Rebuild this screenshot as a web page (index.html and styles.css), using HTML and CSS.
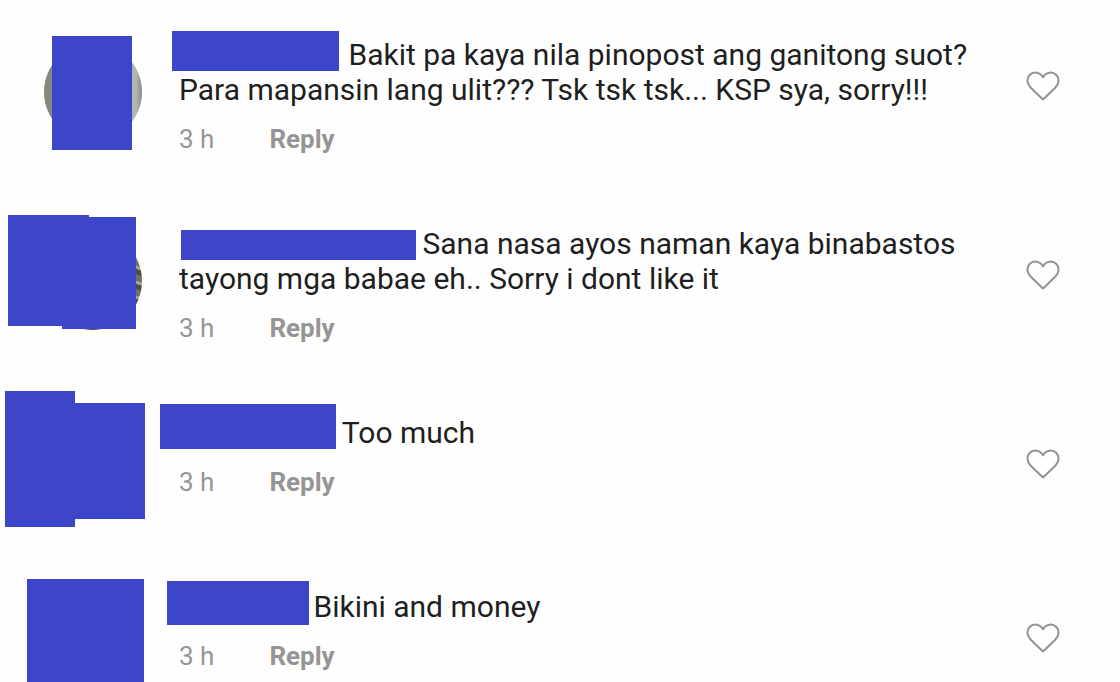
FILE: index.html
```
<!DOCTYPE html>
<html lang="tl">

<head>
    <meta charset="utf-8">
    <meta name="viewport" content="width=device-width, initial-scale=1">
    <title>Comments</title>
    <link rel="stylesheet" href="styles.css">
</head>

<body>
    <svg class="defs" aria-hidden="true">
        <symbol id="heart" viewBox="0 0 34 30">
            <path d="M17 28.5 L4.8 16.8 C0.8 13 0.4 7.4 3.6 4 C7.6 0 14.2 1 17 6.4 C19.8 1 26.4 0 30.4 4 C33.6 7.4 33.2 13 29.2 16.8 Z"
                fill="none" stroke="currentColor" stroke-width="2" stroke-linejoin="round" />
        </symbol>
    </svg>
    <main class="comments">
        <article class="comment">
            <div class="avatar avatar-gray">
                <span class="mask avatar-mask-1"></span>
            </div>
            <div class="content">
                <p class="text"><span class="name name-1"><span class="mask"></span></span> Bakit pa kaya nila pinopost ang ganitong suot? Para mapansin lang ulit??? Tsk tsk tsk... KSP sya, sorry!!!</p>
                <div class="meta">
                    <time>3 h</time>
                    <button type="button" class="reply">Reply</button>
                </div>
            </div>
            <button type="button" class="like" aria-label="Like"><svg><use href="#heart" /></svg></button>
        </article>

        <article class="comment">
            <div class="avatar avatar-photo">
                <span class="mask avatar-mask-2a"></span>
                <span class="mask avatar-mask-2b"></span>
            </div>
            <div class="content">
                <p class="text"><span class="name name-2"><span class="mask"></span></span> Sana nasa ayos naman kaya binabastos tayong mga babae eh.. Sorry i dont like it</p>
                <div class="meta">
                    <time>3 h</time>
                    <button type="button" class="reply">Reply</button>
                </div>
            </div>
            <button type="button" class="like" aria-label="Like"><svg><use href="#heart" /></svg></button>
        </article>

        <article class="comment">
            <div class="avatar">
                <span class="mask avatar-mask-3a"></span>
                <span class="mask avatar-mask-3b"></span>
            </div>
            <div class="content">
                <p class="text"><span class="name name-3"><span class="mask"></span></span> Too much</p>
                <div class="meta">
                    <time>3 h</time>
                    <button type="button" class="reply">Reply</button>
                </div>
            </div>
            <button type="button" class="like" aria-label="Like"><svg><use href="#heart" /></svg></button>
        </article>

        <article class="comment">
            <div class="avatar">
                <span class="mask avatar-mask-4"></span>
            </div>
            <div class="content">
                <p class="text"><span class="name name-4"><span class="mask"></span></span> Bikini and money</p>
                <div class="meta">
                    <time>3 h</time>
                    <button type="button" class="reply">Reply</button>
                </div>
            </div>
            <button type="button" class="like" aria-label="Like"><svg><use href="#heart" /></svg></button>
        </article>
    </main>
</body>

</html>
```

FILE: styles.css
```
body {
    margin: 0;
    font-family: Roboto, "Liberation Sans", sans-serif;
    background-color: #fefefe;
    color: #1f1f1f;
}

.defs {
    display: none;
}

/* The list scrolls inside the window, without a visible scrollbar */
.comments {
    box-sizing: border-box;
    max-height: 100vh;
    padding-top: 5px;
    overflow-y: auto;
    scrollbar-width: none;
}

.comment {
    display: flex;
    align-items: flex-start;
    gap: 37px;
    padding: 0 60px 0 44px;
}

.avatar {
    position: relative;
    flex: none;
    width: 98px;
    height: 98px;
    margin: 38px 0;
    border-radius: 50%;
}

.avatar-gray {
    background: linear-gradient(to right, #85887a 50%, #a9aaa8 50%, #b4b5b4 94%, #858781);
}

.avatar-photo {
    background: repeating-linear-gradient(20deg, #4d5046 0 5px, #a3a58f 5px 8px, #6e7165 8px 14px);
}

.content {
    flex: 1;
    padding: 32px 0 40px;
}

.text {
    margin: 0;
    font-size: 30px;
    line-height: 35px;
}

.meta {
    display: flex;
    gap: 55px;
    margin-top: 17px;
    font-size: 26px;
    line-height: 30px;
    color: #959595;
}

.reply {
    padding: 0;
    border: none;
    background: none;
    font: inherit;
    font-weight: bold;
    color: inherit;
    cursor: pointer;
}

.like {
    flex: none;
    margin-top: 66px;
    padding: 0;
    border: none;
    background: none;
    color: #929292;
    cursor: pointer;
}

.like svg {
    display: block;
    width: 34px;
    height: 30px;
}

/* Blocks that cover names and profile pictures */
.mask {
    position: absolute;
    background-color: #3d45c9;
}

.name {
    position: relative;
    display: inline-block;
    height: 24px;
}

.name-1 { width: 162px; }
.name-2 { width: 236px; }
.name-3 { width: 156px; }
.name-4 { width: 127px; }

.name-1 .mask { inset: -10px 2px -6px -7px; }
.name-2 .mask { inset: 0 -1px -6px 2px; }
.name-3 .mask { inset: -15px -1px -6px -19px; }
.name-4 .mask { inset: -12px -3px -8px -12px; }

.avatar-mask-1 { inset: -7px 10px -9px 8px; }
.avatar-mask-2a { inset: -17px 53px 4px -36px; }
.avatar-mask-2b { inset: -15px 6px 1px 18px; }
.avatar-mask-3a { inset: -30px 67px -8px -39px; }
.avatar-mask-3b { inset: -18px -3px 0 30px; }
.avatar-mask-4 { inset: -16px -2px -10px -17px; }
```
